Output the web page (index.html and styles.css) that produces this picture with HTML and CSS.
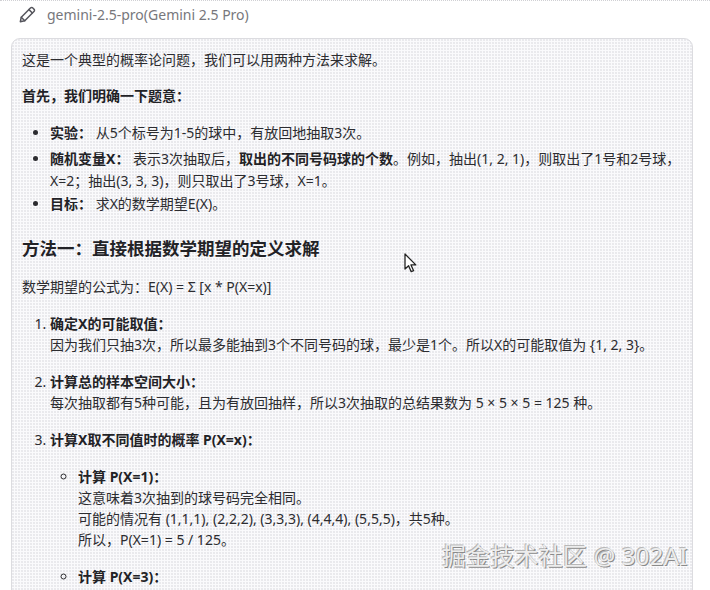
FILE: index.html
```html
<!DOCTYPE html>
<html lang="zh">
<head>
<meta charset="utf-8">
<title>gemini-2.5-pro</title>
<link rel="stylesheet" href="styles.css">
</head>
<body>
<div class="top-rule"></div>
<header class="model">
  <svg class="pen" width="19" height="19" viewBox="0 0 18 18" fill="none" stroke="#55555c" stroke-width="1.4" stroke-linejoin="round" stroke-linecap="round"><path d="M2.2 15.8l.9-4.2L11.8 2.9c.7-.7 1.7-.7 2.3 0l1 1c.7.6.7 1.6 0 2.3l-8.7 8.7z"/><path d="M10.4 4.4l3.2 3.2"/><path d="M3.1 11.6l3.3 3.3"/></svg>
  <span>gemini-2.5-pro(Gemini 2.5 Pro)</span>
</header>
<main class="card">
  <p class="intro">这是一个典型的概率论问题，我们可以用两种方法来求解。</p>
  <p><b>首先，我们明确一下题意：</b></p>
  <ul class="facts">
    <li><b>实验：</b> 从5个标号为1-5的球中，有放回地抽取3次。</li>
    <li><b>随机变量X：</b> 表示3次抽取后，<b>取出的不同号码球的个数</b>。例如，抽出(1, 2, 1)，则取出了1号和2号球，X=2；抽出(3, 3, 3)，则只取出了3号球，X=1。</li>
    <li><b>目标：</b> 求X的数学期望E(X)。</li>
  </ul>
  <h3>方法一：直接根据数学期望的定义求解</h3>
  <p>数学期望的公式为：E(X) = Σ [x * P(X=x)]</p>
  <ol>
    <li><b>确定X的可能取值：</b><br>因为我们只抽3次，所以最多能抽到3个不同号码的球，最少是1个。所以X的可能取值为 {1, 2, 3}。</li>
    <li><b>计算总的样本空间大小：</b><br>每次抽取都有5种可能，且为有放回抽样，所以3次抽取的总结果数为 5 × 5 × 5 = 125 种。</li>
    <li><b>计算X取不同值时的概率 P(X=x)：</b>
      <ul class="cases">
        <li><b>计算 P(X=1)：</b><br>这意味着3次抽到的球号码完全相同。<br>可能的情况有 (1,1,1), (2,2,2), (3,3,3), (4,4,4), (5,5,5)，共5种。<br>所以，P(X=1) = 5 / 125。</li>
        <li><b>计算 P(X=3)：</b></li>
      </ul>
    </li>
  </ol>
</main>
<svg class="cursor" width="14" height="21" viewBox="0 0 14 21"><path d="M1 1v15l3.6-3.3 2.6 6 2.4-1-2.6-5.8h4.8z" fill="#fff" stroke="#222" stroke-width="1.3" stroke-linejoin="round"/></svg>
<div class="watermark">掘金技术社区 @ 302AI</div>
</body>
</html>
```

FILE: styles.css
```css
* { box-sizing: border-box; }
html, body { height: 100%; }
body {
  margin: 0;
  height: 590px;
  overflow: hidden;
  position: relative;
  background: #fff;
  color: #2c2c30;
  font: 14px/21px "Noto Sans", "Noto Sans CJK SC", sans-serif;
}
.top-rule { height: 1px; border-top: 1px dotted #d0d0d4; }
.model {
  display: flex;
  align-items: center;
  gap: 10px;
  height: 26px;
  padding-left: 18px;
  color: #77777c;
  font-size: 14px;
}
.card {
  margin: 11px 17px 0 11px;
  padding: 10px;
  height: 600px;
  border: 1px solid #dcdce0;
  border-radius: 9px;
  background-color: #fafafc;
  background-image: radial-gradient(circle at 1px 1px, #e8e8ec 0.7px, transparent 0.8px);
  background-size: 3px 3px;
}
p { margin: 0 0 16px; }
.intro { margin-bottom: 15px; }
b { font-weight: 700; color: #222226; }
ul, ol { margin: 0; padding: 0; }
.facts { margin: 0 0 20px; padding-left: 28px; list-style: disc; }
.facts li { margin-bottom: 1px; line-height: 22px; }
.facts li:first-child { margin-bottom: 4px; }
h3 { margin: 0 0 15px; font-size: 17.5px; line-height: 26px; color: #222226; }
ol { padding-left: 28px; }
ol > li { margin-bottom: 16px; }
.cases { margin-top: 16px; padding-left: 28px; list-style: circle; }
.cases li { margin-bottom: 16px; }
.cursor { position: absolute; left: 404px; top: 253px; }
.watermark {
  position: absolute;
  left: 442px;
  top: 541px;
  color: #ededed;
  font-size: 24px;
  line-height: 30px;
  letter-spacing: 0.2px;
  text-shadow: 1px 1px 0 #8a8a8a, -1px -1px 0 #b8b8b8;
}
```
